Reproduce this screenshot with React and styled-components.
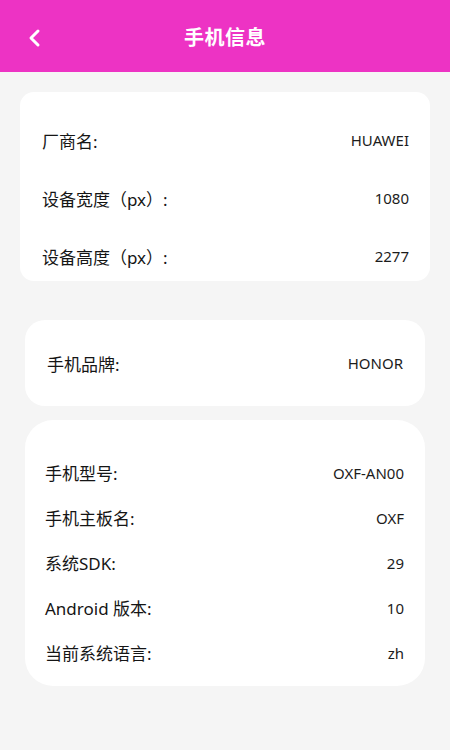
import styled, { createGlobalStyle } from "styled-components";

const GlobalStyle = createGlobalStyle`
  html, body {
    margin: 0;
    padding: 0;
    background: #f5f5f5;
  }
  body {
    font-family: "Noto Sans", "Noto Sans CJK SC", sans-serif;
    color: #151515;
  }
`;

const deviceRows = [
  ["厂商名:", "HUAWEI"],
  ["设备宽度（px）:", "1080"],
  ["设备高度（px）:", "2277"],
];

const modelRows = [
  ["手机型号:", "OXF-AN00"],
  ["手机主板名:", "OXF"],
  ["系统SDK:", "29"],
  ["Android 版本:", "10"],
  ["当前系统语言:", "zh"],
];

const Back = () => (
  <svg width="16" height="20" viewBox="0 0 16 20">
    <path
      d="M11 3 L4 10 L11 17"
      fill="none"
      stroke="#fff"
      strokeWidth="3"
      strokeLinecap="round"
      strokeLinejoin="round"
    />
  </svg>
);

export default function App() {
  return (
    <Page>
      <GlobalStyle />
      <Header>
        <BackBtn>
          <Back />
        </BackBtn>
        <Title>手机信息</Title>
      </Header>

      <Card $inset={20} $radius={14} $pad="26px 21px 3px 22px" $gap={14}>
        {deviceRows.map(([k, v]) => (
          <Row key={k} $h={44}>
            <Label>{k}</Label>
            <Value>{v}</Value>
          </Row>
        ))}
      </Card>

      <Card $inset={25} $radius={20} $pad="0 22px" $top={39}>
        <Row $h={86}>
          <Label>手机品牌:</Label>
          <Value>HONOR</Value>
        </Row>
      </Card>

      <Card $inset={25} $radius={28} $pad="30px 21px 11px 20px" $top={14}>
        {modelRows.map(([k, v]) => (
          <Row key={k} $h={45}>
            <Label>{k}</Label>
            <Value>{v}</Value>
          </Row>
        ))}
      </Card>
    </Page>
  );
}

const Page = styled.div`
  min-height: 750px;
  background: #f5f5f5;
  display: flex;
  flex-direction: column;
`;

const Header = styled.header`
  height: 72px;
  background: #ed33c4;
  display: flex;
  align-items: center;
  justify-content: center;
  position: relative;
`;

const BackBtn = styled.div`
  position: absolute;
  left: 27px;
  top: 28px;
  display: flex;
`;

const Title = styled.h1`
  margin: 0;
  font-size: 20px;
  font-weight: 700;
  color: #fff;
  letter-spacing: 0.5px;
`;

const Card = styled.section`
  margin: ${(p) => p.$top || 20}px ${(p) => p.$inset}px 0;
  background: #fff;
  border-radius: ${(p) => p.$radius}px;
  padding: ${(p) => p.$pad};
  display: flex;
  flex-direction: column;
  gap: ${(p) => p.$gap || 0}px;
`;

const Row = styled.div`
  height: ${(p) => p.$h}px;
  display: flex;
  align-items: center;
  justify-content: space-between;
`;

const Label = styled.span`
  font-size: 17px;
  color: #151515;
`;

const Value = styled.span`
  font-size: 15px;
  color: #1c1c1c;
`;
